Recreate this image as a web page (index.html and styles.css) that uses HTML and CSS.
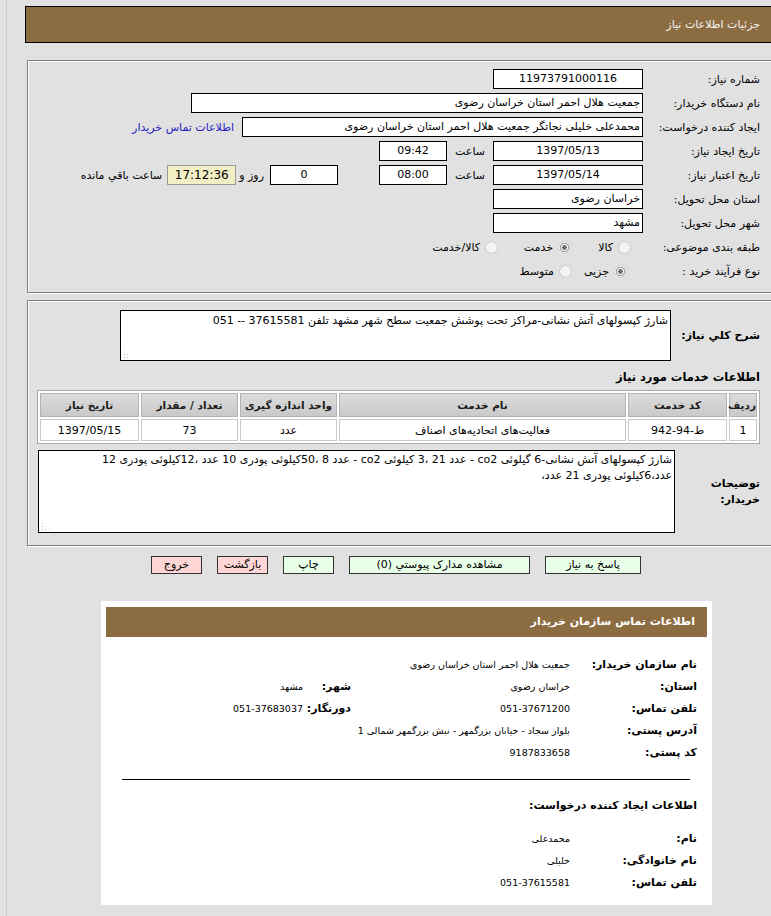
FILE: index.html
```html
<!DOCTYPE html>
<html lang="fa">
<head>
<meta charset="utf-8">
<title>جزئیات اطلاعات نیاز</title>
<link rel="stylesheet" href="styles.css">
</head>
<body>
<div class="page">
  <div class="title-bar" dir="rtl">جزئیات اطلاعات نیاز</div>

  <div class="panel info-panel" dir="rtl">
    <div class="row">
      <span class="lbl">شماره نیاز:</span>
      <span class="box w150 center">11973791000116</span>
    </div>
    <div class="row">
      <span class="lbl">نام دستگاه خریدار:</span>
      <span class="box w452">جمعیت هلال احمر استان خراسان رضوی</span>
    </div>
    <div class="row">
      <span class="lbl">ایجاد کننده درخواست:</span>
      <span class="box w401">محمدعلی خلیلی نجاتگر جمعیت هلال احمر استان خراسان رضوی</span>
      <a class="contact-link" href="#">اطلاعات تماس خریدار</a>
    </div>
    <div class="row">
      <span class="lbl">تاریخ ایجاد نیاز:</span>
      <span class="box w150 center">1397/05/13</span>
      <span class="time-lbl">ساعت</span>
      <span class="box w68 center">09:42</span>
    </div>
    <div class="row">
      <span class="lbl">تاریخ اعتبار نیاز:</span>
      <span class="box w150 center">1397/05/14</span>
      <span class="time-lbl">ساعت</span>
      <span class="box w68 center">08:00</span>
      <span class="box w68 center days-box">0</span>
      <span class="days-lbl">روز و</span>
      <span class="box remain center">17:12:36</span>
      <span class="remain-lbl">ساعت باقي مانده</span>
    </div>
    <div class="row">
      <span class="lbl">استان محل تحویل:</span>
      <span class="box w150">خراسان رضوی</span>
    </div>
    <div class="row">
      <span class="lbl">شهر محل تحویل:</span>
      <span class="box w150">مشهد</span>
    </div>
    <div class="row">
      <span class="lbl">طبقه بندی موضوعی:</span>
      <span class="opt cat-a"><span class="radio"></span>کالا</span>
      <span class="opt cat-b"><span class="radio on"></span>خدمت</span>
      <span class="opt"><span class="radio"></span>کالا/خدمت</span>
    </div>
    <div class="row">
      <span class="lbl">نوع فرآیند خرید :</span>
      <span class="opt proc-a"><span class="radio on"></span>جزیی</span>
      <span class="opt"><span class="radio"></span>متوسط</span>
    </div>
  </div>

  <div class="panel desc-panel" dir="rtl">
    <div class="desc-row">
      <span class="blbl desc-lbl">شرح کلي نیاز:</span>
      <div class="tarea ta-desc">شارژ کپسولهای آتش نشانی-مراکز تحت پوشش جمعیت سطح شهر مشهد تلفن 37615581 -- 051</div>
    </div>
    <div class="section-title">اطلاعات خدمات مورد نیاز</div>
    <table class="items">
      <colgroup>
        <col class="c-row"><col class="c-code"><col class="c-name"><col class="c-unit"><col class="c-qty"><col class="c-date">
      </colgroup>
      <thead>
        <tr><th>ردیف</th><th>کد خدمت</th><th>نام خدمت</th><th>واحد اندازه گیری</th><th>تعداد / مقدار</th><th>تاریخ نیاز</th></tr>
      </thead>
      <tbody>
        <tr><td>1</td><td>ط-94-942</td><td>فعالیت‌های اتحادیه‌های اصناف</td><td>عدد</td><td>73</td><td>1397/05/15</td></tr>
      </tbody>
    </table>
    <div class="notes-row">
      <span class="blbl notes-lbl">توضیحات<br>خریدار:</span>
      <div class="tarea ta-notes">شارژ کپسولهای آتش نشانی-6 گیلوئی co2 - عدد 21 ،3 کیلوئی co2 - عدد 8 ،50کیلوئی پودری 10 عدد ،12کیلوئی پودری 12
عدد،6کیلوئی پودری 21 عدد،</div>
    </div>
  </div>

  <div class="buttons" dir="rtl">
    <span class="btn green b-reply">پاسخ به نیاز</span>
    <span class="btn green b-docs">مشاهده مدارک پیوستي (0)</span>
    <span class="btn green b-small">چاپ</span>
    <span class="btn pink b-small">بازگشت</span>
    <span class="btn pink b-small">خروج</span>
  </div>

  <div class="card" dir="rtl">
    <div class="card-head">اطلاعات تماس سازمان خریدار</div>
    <div class="card-grid">
      <span class="clbl">نام سازمان خریدار:</span>
      <span class="cval span3">جمعیت هلال احمر استان خراسان رضوی</span>

      <span class="clbl">استان:</span>
      <span class="cval">خراسان رضوی</span>
      <span class="clbl">شهر:</span>
      <span class="cval">مشهد</span>

      <span class="clbl">تلفن تماس:</span>
      <span class="cval">051-37671200</span>
      <span class="clbl">دورنگار:</span>
      <span class="cval">051-37683037</span>

      <span class="clbl">آدرس پستی:</span>
      <span class="cval span3">بلوار سجاد - خیابان بزرگمهر - نبش بزرگمهر شمالی 1</span>

      <span class="clbl">کد پستی:</span>
      <span class="cval span3">9187833658</span>
    </div>
    <div class="card-rule"></div>
    <div class="card-sub">اطلاعات ایجاد کننده درخواست:</div>
    <div class="card-grid creator">
      <span class="clbl">نام:</span>
      <span class="cval">محمدعلی</span>

      <span class="clbl">نام خانوادگی:</span>
      <span class="cval">خلیلی</span>

      <span class="clbl">تلفن تماس:</span>
      <span class="cval">051-37615581</span>
    </div>
  </div>
</div>
</body>
</html>
```

FILE: styles.css
```css
html, body {
  margin: 0;
  padding: 0;
}
html {
  overflow: hidden;
}
body {
  width: 771px;
  overflow: hidden;
  background: #e1e1e1;
  font-family: "DejaVu Sans", sans-serif;
  font-size: 11px;
  color: #000;
}
.page {
  margin-left: 6px;
  border-left: 1px solid #cdcdcd;
  padding-left: 18px;
  padding-top: 6px;
  width: 755px;
  min-height: 916px;
}

/* title bar */
.title-bar {
  height: 35px;
  border: 1px solid #000;
  background: #8c6d42;
  color: #f4f4f4;
  line-height: 35px;
  padding-right: 19px;
  text-align: right;
}

/* panels */
.panel {
  margin-left: 2px;
  border: 1px solid #808080;
  box-shadow: inset 1px 1px 0 #fff, 1px 1px 0 #fff;
  padding-right: 19px;
}
.info-panel {
  margin-top: 17px;
  padding-top: 6px;
  padding-bottom: 9px;
}
.row {
  display: flex;
  align-items: center;
  height: 24px;
  white-space: nowrap;
}
.lbl {
  flex: none;
  width: 113px;
  margin-left: 4px;
}
.box {
  flex: none;
  box-sizing: border-box;
  height: 20px;
  border: 1px solid #000;
  background: #fff;
  line-height: 18px;
  padding: 0 2px;
  overflow: hidden;
}
.center { text-align: center; }
.w150 { width: 150px; }
.w452 { width: 452px; }
.w401 { width: 401px; }
.w68 { width: 68px; }
.contact-link {
  margin-right: 8px;
  color: #2222c4;
  text-decoration: none;
}
.time-lbl {
  flex: none;
  width: 46px;
  text-align: center;
}
.days-box { margin-right: 41px; }
.days-lbl {
  margin-right: 6px;
  margin-left: 3px;
}
.remain {
  width: 69px;
  background: #f3efc4;
  border-color: #9a9a9a;
  font-size: 12px;
}
.remain-lbl { margin-right: 5px; }

/* radios */
.opt {
  display: flex;
  align-items: center;
  flex: none;
}
.radio {
  width: 13px;
  height: 13px;
  box-sizing: border-box;
  border-radius: 50%;
  border: 1px solid #cfcfcf;
  background: radial-gradient(circle, #f4f4f4 0 5px, #e2e2e2 5.5px);
  margin-left: 5px;
  flex: none;
}
.radio.on {
  background: radial-gradient(circle, #6f6f6f 0 2px, #f4f4f4 2.6px 3.4px, #9d9d9d 3.8px 4.4px, #f2f2f2 4.9px);
}
.cat-a { margin-right: 12px; width: 60px; }
.cat-b { width: 73px; }
.proc-a { margin-right: 16px; width: 55px; }

/* description panel */
.desc-panel {
  margin-top: 7px;
  padding-top: 9px;
  padding-bottom: 12px;
}
.blbl {
  flex: none;
  font-weight: bold;
  font-size: 11px;
}
.desc-row,
.notes-row {
  display: flex;
  align-items: center;
}
.desc-lbl {
  width: 82px;
  margin-left: 7px;
  white-space: nowrap;
}
.tarea {
  position: relative;
  box-sizing: border-box;
  border: 1px solid #000;
  background: #fff;
  white-space: pre-wrap;
  line-height: 16px;
  padding: 2px 2px 0 2px;
}
.tarea::after {
  content: "";
  position: absolute;
  left: 2px;
  bottom: 2px;
  width: 8px;
  height: 8px;
  background-image: radial-gradient(circle, #b4b4b4 0 0.7px, transparent 1px);
  background-size: 3px 3px;
  clip-path: polygon(0 0, 100% 100%, 0 100%);
}
.ta-desc {
  width: 551px;
  height: 51px;
}
.section-title {
  margin-top: 8px;
  line-height: 16px;
  font-weight: bold;
  font-size: 11.5px;
}
.items {
  margin-top: 5px;
  width: 723px;
  table-layout: fixed;
  border: 1px solid #a9a9a9;
  border-spacing: 2px;
  background: #fff;
  font-size: 11px;
}
.c-row { width: 28px; }
.c-code { width: 99px; }
.c-name { width: 287px; }
.c-unit { width: 97px; }
.c-qty { width: 97px; }
.c-date { width: 99px; }
.items th {
  height: 22px;
  padding: 0;
  border: 1px solid #b3b3b3;
  background: linear-gradient(#dcdcdc, #c9c9c9);
  font-weight: bold;
  font-size: 10.5px;
  color: #1b1b1b;
  text-align: center;
  white-space: nowrap;
}
.items td {
  height: 20px;
  padding: 0;
  border: 1px solid #cacaca;
  text-align: center;
  white-space: nowrap;
}
.notes-row { margin-top: 6px; }
.notes-lbl {
  width: 78px;
  margin-left: 7px;
  line-height: 16px;
}
.ta-notes {
  width: 637px;
  height: 83px;
  padding-top: 1px;
}

/* buttons */
.buttons {
  display: flex;
  gap: 15px;
  margin-top: 10px;
  padding-right: 139px;
}
.btn {
  box-sizing: border-box;
  height: 18px;
  line-height: 16px;
  border: 1px solid #333;
  text-align: center;
  font-size: 11px;
}
.green { background: #e8ffe8; }
.pink { background: #ffd6d6; }
.b-reply { width: 96px; }
.b-docs { width: 181px; }
.b-small { width: 51px; }

/* contact card */
.card {
  margin-top: 27px;
  margin-left: 76px;
  width: 611px;
  box-sizing: border-box;
  background: #fff;
  padding: 6px 5px 12px;
}
.card-head {
  height: 30px;
  line-height: 30px;
  background: #8c6d42;
  color: #fff;
  font-weight: bold;
  font-size: 11px;
  padding-right: 12px;
}
.card-grid {
  display: grid;
  grid-template-columns: 127px 219px 48px auto;
  grid-auto-rows: 22px;
  align-items: center;
  margin-top: 16px;
  margin-right: 10px;
}
.clbl {
  font-weight: bold;
  font-size: 11px;
  white-space: nowrap;
}
.cval {
  font-size: 9.5px;
  white-space: nowrap;
}
.span3 { grid-column: span 3; }
.card-rule {
  height: 1px;
  background: #000;
  margin: 16px 17px 0 16px;
}
.card-sub {
  margin-top: 18px;
  margin-right: 10px;
  line-height: 16px;
  font-weight: bold;
  font-size: 11px;
}
.creator {
  margin-top: 13px;
  grid-template-columns: 127px auto;
}
```
